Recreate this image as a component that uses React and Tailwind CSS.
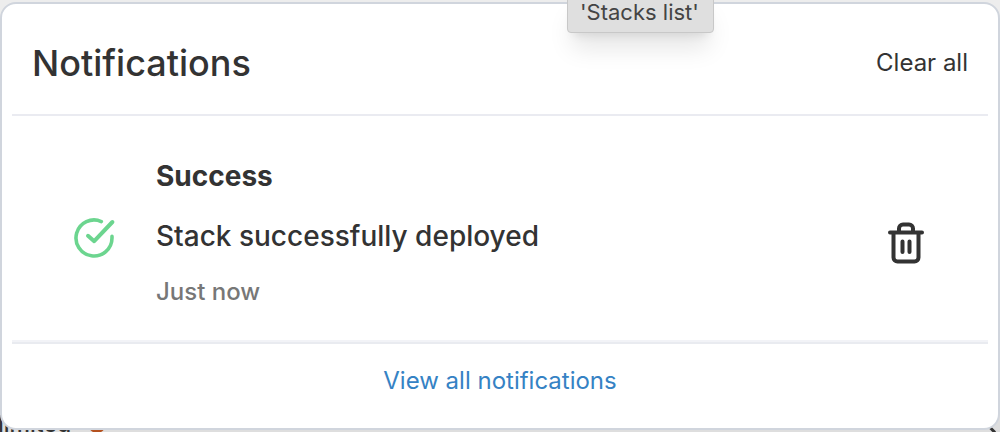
import React from "react";

function CheckIcon() {
  return (
    <svg viewBox="0 0 24 24" className="mt-3 size-12 text-[#6cd58f]" fill="none" stroke="currentColor" strokeWidth="2" strokeLinecap="round" strokeLinejoin="round" aria-hidden="true">
      <path d="M22 11.1V12a10 10 0 1 1-5.93-9.14" transform="translate(1.2 1.2) scale(.9)" />
      <path d="M21.200 4 12.100 13.600 9 10.900" />
    </svg>
  );
}

function TrashIcon() {
  return (
    <svg viewBox="0 0 36 42" className="h-[42px] w-9 text-[#333]" fill="none" stroke="currentColor" strokeWidth="4" strokeLinecap="round" strokeLinejoin="round" aria-hidden="true">
      <path d="M2 10.500h32M5.500 10.500v25a4 4 0 0 0 4 4h17a4 4 0 0 0 4-4V10.500M11 10V6.500a4 4 0 0 1 4-4h6a4 4 0 0 1 4 4v4M14.500 19.500v10.500M21.500 19.500v10.500" />
    </svg>
  );
}

function PageBehind() {
  return (
    <div className="absolute inset-x-0 bottom-0 flex h-6 items-end justify-between bg-[#dedede]" aria-hidden="true">
      <div className="flex items-end gap-4">
        <span className="-mb-1 -ml-0.5 text-[23px] leading-6 font-medium text-[#333]">limited</span>
        <svg viewBox="0 0 20 20" className="size-5" fill="#b4511f">
          <ellipse cx="10" cy="9" rx="10" ry="12" />
        </svg>
      </div>
      <svg viewBox="0 0 12 6" className="h-1.5 w-3" fill="none" stroke="#333" strokeWidth="3">
        <path d="M2 1.500 7 6.500" />
      </svg>
    </div>
  );
}

export default function App() {
  return (
    <div className="relative h-screen overflow-hidden bg-[#ededed] pt-0.5 font-['Inter',sans-serif] text-[#333]">
      <PageBehind />
      <section className="relative z-10 rounded-2xl border-2 border-[#d0d5dd] bg-white px-2.5">
        <header className="flex h-28 items-center justify-between border-b-2 border-[#eaebf1] px-5 pt-2">
          <h1 className="text-4xl font-medium">Notifications</h1>
          <button type="button" className="text-2xl">Clear all</button>
        </header>
        <div className="flex h-[226px] items-center border-b-2 border-[#f2f3f7] pt-2 pr-16 pl-[58px]">
          <CheckIcon />
          <div className="ml-[38px] flex flex-1 flex-col gap-5">
            <h2 className="text-[28px] leading-10 font-bold">Success</h2>
            <p className="text-[28px] leading-10 font-medium">Stack successfully deployed</p>
            <p className="text-2xl leading-8 font-medium text-[#777]">Just now</p>
          </div>
          <button type="button" aria-label="Delete notification" className="mt-[22px]"><TrashIcon /></button>
        </div>
        <footer className="flex h-[86px] items-center justify-center border-t-2 border-[#e9ebf0] pb-2.5">
          <a href="#notifications" className="text-2xl text-[#3582c4]">View all notifications</a>
        </footer>
      </section>
      <div role="tooltip" className="absolute -top-[7px] left-[567px] z-20 rounded-b-sm border border-[#c8c8c8] bg-[#dfdfdf] pt-0.5 pr-3.5 pb-1 pl-3 text-[22px] leading-8 text-[#444] shadow-xl">
        'Stacks list'
      </div>
    </div>
  );
}
